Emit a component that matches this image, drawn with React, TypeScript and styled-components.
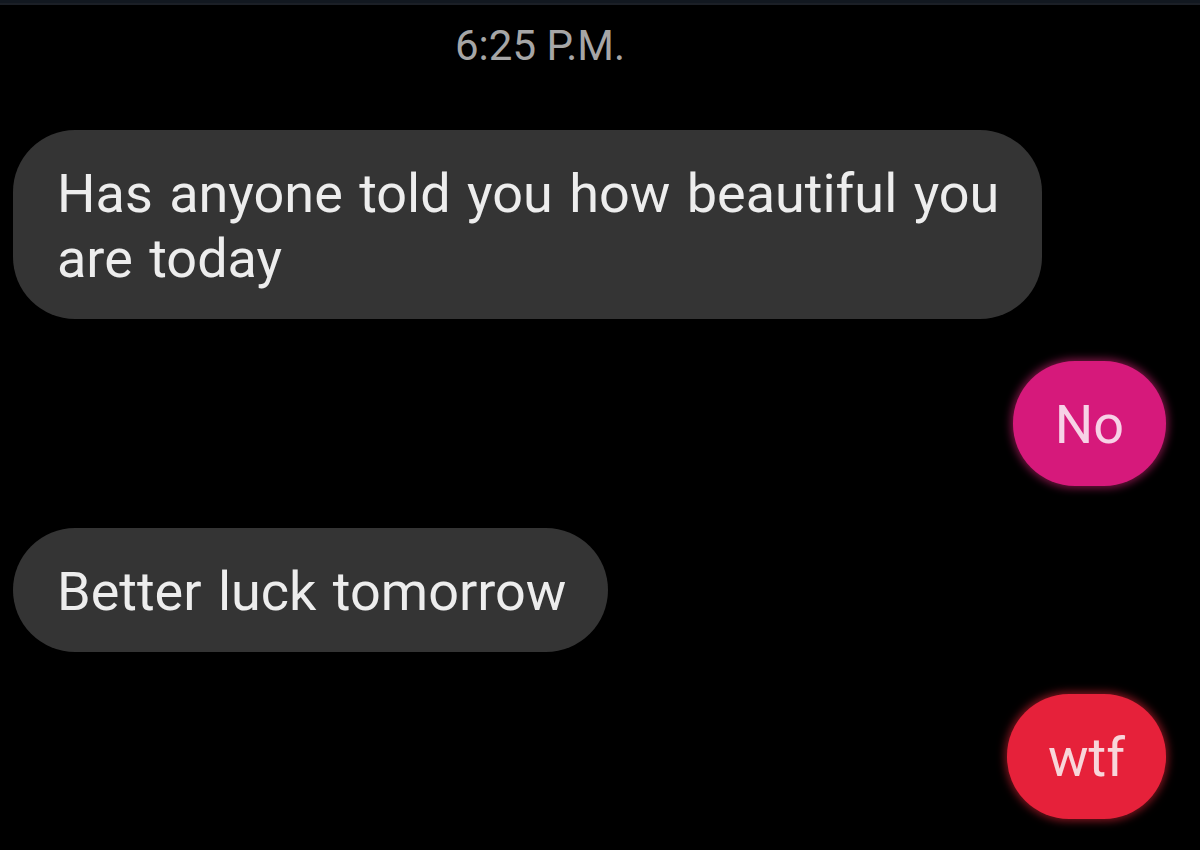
import React from "react";
import styled, { createGlobalStyle, css } from "styled-components";

const GlobalStyle = createGlobalStyle`
  html, body {
    margin: 0;
    padding: 0;
    background: #000000;
  }
  body {
    font-family: Roboto, "Noto Sans", "Liberation Sans", sans-serif;
  }
`;

const Screen = styled.div`
  width: 1200px;
  height: 850px;
  background: #000000;
  display: flex;
  flex-direction: column;
  overflow: hidden;
`;

const TopBar = styled.div`
  height: 3px;
  background: #121820;
  border-bottom: 2px solid #1b1f26;
  flex-shrink: 0;
`;

const Thread = styled.div`
  display: flex;
  flex-direction: column;
  padding: 20px 34px 0 13px;
`;

const Timestamp = styled.div`
  align-self: flex-start;
  margin-left: 442px;
  font-size: 42px;
  line-height: 1;
  color: #a6a6a6;
  margin-bottom: 63px;
`;

const Row = styled.div<{ $out?: boolean }>`
  display: flex;
  justify-content: ${(p) => (p.$out ? "flex-end" : "flex-start")};
  margin-bottom: 42px;
`;

const Bubble = styled.div<{ $tone: "gray" | "pink" | "red" }>`
  font-size: 54px;
  line-height: 65px;
  color: #ededed;
  padding: 31px 42px 28px 44px;
  border-radius: 62px;
  box-sizing: border-box;
  ${(p) =>
    p.$tone === "gray" &&
    css`
      background: #343434;
      max-width: 1029px;
      word-spacing: 3px;
    `}
  ${(p) =>
    p.$tone === "pink" &&
    css`
      background: #d6197b;
      color: #f7d2e6;
      padding: 31px 42px 29px 42px;
      box-shadow: 0 0 8px 2px rgba(232, 40, 130, 0.55);
    `}
  ${(p) =>
    p.$tone === "red" &&
    css`
      background: #e6213a;
      color: #f8d6da;
      padding: 31px 41px 29px 41px;
      box-shadow: 0 0 8px 2px rgba(240, 40, 60, 0.55);
    `}
`;

export default function App() {
  return (
    <>
      <GlobalStyle />
      <Screen>
        <TopBar />
        <Thread>
          <Timestamp>6:25 P.M.</Timestamp>
          <Row>
            <Bubble $tone="gray">
              Has anyone told you how beautiful you are today
            </Bubble>
          </Row>
          <Row $out>
            <Bubble $tone="pink">No</Bubble>
          </Row>
          <Row>
            <Bubble $tone="gray">Better luck tomorrow</Bubble>
          </Row>
          <Row $out>
            <Bubble $tone="red">wtf</Bubble>
          </Row>
        </Thread>
      </Screen>
    </>
  );
}
